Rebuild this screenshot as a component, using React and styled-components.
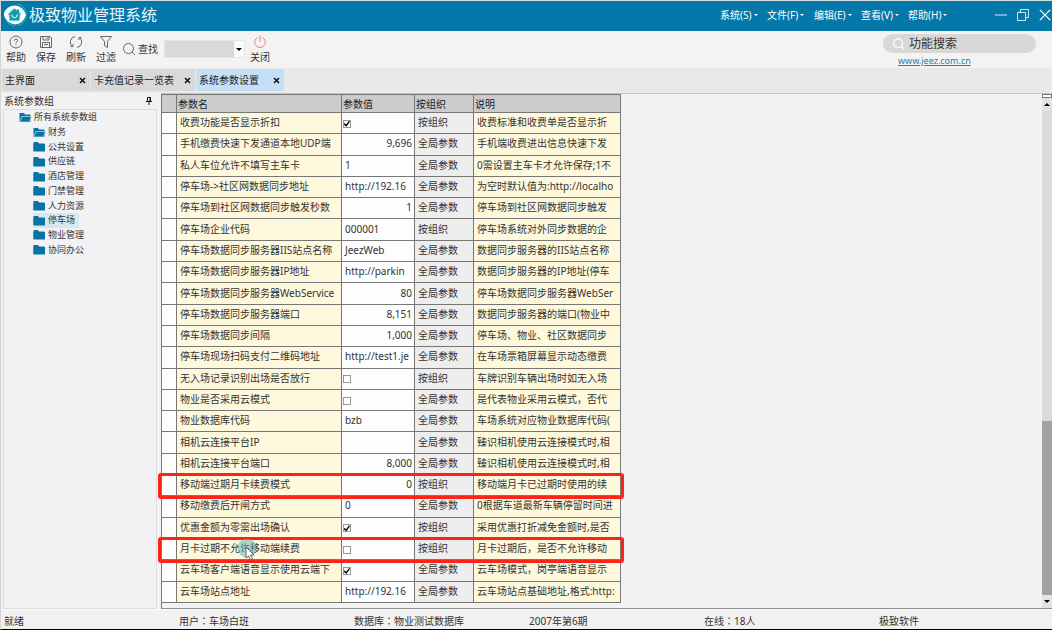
import React from "react";
import styled, { createGlobalStyle, css } from "styled-components";

const GlobalStyle = createGlobalStyle`
  *, *::before, *::after { box-sizing: border-box; }
  body {
    margin: 0;
    background: #f2f2f2;
    color: #333;
    font: 10px/14px "Noto Sans", "Noto Sans CJK SC", sans-serif;
  }
  button, input, select { font: inherit; color: inherit; }
`;

const plainButton = css`
  border: 0;
  padding: 0;
  background: none;
  cursor: pointer;
`;

const Window = styled.div`
  display: flex;
  flex-direction: column;
  min-height: 100vh;
  border-left: 1px solid #d4d4d4;
  border-bottom: 1px solid #000;
`;

const TitleBar = styled.header`
  display: flex;
  align-items: center;
  height: 31px;
  padding: 0 1px 2px 2px;
  border-top: 1px solid #d5dcdf;
  background: #0478a8;
  color: #fff;
`;

const Title = styled.h1`
  flex: 1;
  margin: 0 0 0 2px;
  font-size: 16px;
  line-height: 24px;
  font-weight: 400;
  color: #e6f6ff;
`;

const MenuBar = styled.nav`
  display: flex;
  margin-right: 40px;
`;

const MenuButton = styled.button`
  ${plainButton}
  display: flex;
  align-items: center;
  gap: 2px;
  width: 47px;
  white-space: nowrap;

  &::after {
    content: "";
    border: 2px solid transparent;
    border-top-color: #fff;
    border-bottom: 0;
  }
`;

const WindowControls = styled.div`
  display: flex;
  gap: 10px;
`;

const WindowButton = styled.button`
  ${plainButton}
  display: flex;
  width: 12px;
  height: 12px;
`;

const Toolbar = styled.div`
  display: flex;
  height: 37px;
  background: #f3f3f3;
`;

const ToolButton = styled.button`
  ${plainButton}
  display: flex;
  flex-direction: column;
  align-items: center;
  gap: 1px;
  width: 30px;
  padding-top: 4px;
`;

const FindField = styled.label`
  display: flex;
  align-items: center;
  gap: 2px;
  margin-left: 1px;
  padding-bottom: 2px;
`;

const Combo = styled.span`
  position: relative;
  display: flex;
  margin-left: 4px;

  &::after {
    content: "";
    position: absolute;
    right: 3px;
    top: 8px;
    border: 3px solid transparent;
    border-top-color: #000;
    border-bottom: 0;
    pointer-events: none;
  }
`;

const ComboSelect = styled.select`
  appearance: none;
  width: 81px;
  height: 18px;
  border: 1px solid #e6e6e6;
  border-radius: 0;
  background: linear-gradient(to left, #fafafa 10px, #d9d9d9 10px);
`;

const SearchArea = styled.div`
  display: flex;
  flex-direction: column;
  align-items: flex-start;
  width: 153px;
  margin: 3px 16px 0 auto;
`;

const SearchBox = styled.label`
  display: flex;
  align-items: center;
  gap: 4px;
  width: 100%;
  height: 19px;
  padding: 0 10px;
  border-radius: 10px;
  background: #d8d8d8;
`;

const SearchInput = styled.input`
  flex: 1;
  min-width: 0;
  padding: 0;
  border: 0;
  outline: 0;
  background: none;
  font-size: 12px;
  line-height: 18px;

  &::placeholder { color: #333; opacity: 1; }
`;

const SiteLink = styled.a`
  margin: 1px 0 0 15px;
  font-size: 9px;
  line-height: 14px;
  color: #257fa8;
`;

const TabStrip = styled.div`
  display: flex;
  gap: 1px;
  height: 25px;
  padding: 1px 0 2px 1px;
  background: #e9e9e9;
`;

const Tab = styled.div`
  display: flex;
  align-items: center;
  justify-content: space-between;
  width: ${(p) => p.$width}px;
  padding: 0 4px 0 3px;
  background: ${(p) => (p.$active ? "#c5e0f6" : "#d9d9d9")};
`;

const TabName = styled.button`
  ${plainButton}
  color: #222;
  white-space: nowrap;
`;

const TabClose = styled.button`
  ${plainButton}
  display: flex;
`;

const Main = styled.main`
  display: flex;
  flex: 1;
`;

const Sidebar = styled.aside`
  display: flex;
  flex-direction: column;
  width: 156px;
  margin-right: 4px;
  padding-left: 2px;
`;

const SidebarHead = styled.div`
  display: flex;
  align-items: center;
  justify-content: space-between;
  height: 16px;
  padding: 0 5px 0 1px;
`;

const SidebarTitle = styled.h2`
  margin: 0;
  font-size: 10px;
  font-weight: 400;
`;

const TreePane = styled.div`
  flex: 1;
  border: 1px solid #dcdcdc;
  background: #f2f2f4;
`;

const Tree = styled.ul`
  display: grid;
  grid-auto-rows: 1fr;
  height: 147px;
  margin: 0;
  padding: 0;
  list-style: none;
  font-size: 9px;
`;

const TreeItem = styled.li`
  display: flex;
  padding-left: ${(p) => (p.$root ? 15 : 29)}px;
`;

const TreeButton = styled.button`
  ${plainButton}
  display: flex;
  align-items: center;
  gap: 2px;
  padding-right: 4px;
  background: ${(p) => (p.$selected ? "#d5e9ef" : "none")};
`;

const GridPanel = styled.section`
  display: flex;
  flex: 1;
  border-top: 1px solid #c4c4c4;
  border-bottom: 1px solid #8f8f8f;
`;

const GridArea = styled.div`
  display: flex;
  flex: 1;
  padding-bottom: 5px;
  border-left: 1px solid #777;
`;

const Table = styled.table`
  table-layout: fixed;
  width: 459px;
  border-spacing: 0;
  border-top: 1px solid #777;
`;

const HeadRow = styled.tr`
  height: 18px;
`;

const HeadCell = styled.th`
  padding: 0 1px;
  border-right: 1px solid #777;
  border-bottom: 1px solid #777;
  background: #cccccc;
  color: #222;
  font-weight: 400;
  text-align: left;
`;

const Row = styled.tr`
  position: relative;
`;

const Cell = styled.td`
  position: relative;
  padding: 0 2px 2px 3px;
  border-right: 1px solid #777;
  border-bottom: 1px solid #777;
  background: ${(p) => ({ note: "#fef8dd", scope: "#ededed" })[p.$kind] || "#fdfdfd"};
  text-align: ${(p) => (p.$numeric ? "right" : "left")};
  white-space: nowrap;
`;

const SelectorCell = styled.td`
  padding: 0;
  border-right: 1px solid #777;
  border-bottom: 1px solid #777;
  background: #fdfdfd;
`;

const Outline = styled.span`
  position: absolute;
  z-index: 1;
  inset: -2px -3px -3px -4px;
  border: 3px solid #fb2418;
  border-radius: 3px;
  pointer-events: none;
`;

const CheckBox = styled.input`
  appearance: none;
  display: block;
  width: 8px;
  height: 8px;
  margin: 3px 0 0 -2px;
  border: 1px solid #999;
  background: #fff;

  &:checked::after {
    content: "";
    display: block;
    width: 6px;
    height: 6px;
    background: #000;
    clip-path: polygon(0 40%, 35% 65%, 85% 0, 100% 15%, 40% 100%, 0 70%);
  }
`;

const Pointer = styled.svg`
  position: absolute;
  z-index: 2;
  left: 58px;
  top: 0;
  pointer-events: none;
`;

const ScrollBar = styled.div`
  display: flex;
  flex-direction: column;
  width: 10px;
  background: #d9dad9;
`;

const ScrollSplit = styled.div`
  height: 4px;
  border: 1px solid #777;
  background: #fff;
`;

const ScrollArrow = styled.button`
  ${plainButton}
  display: flex;
  align-items: center;
  justify-content: center;
  height: 13px;
  background: #e3e3e3;

  &::after {
    content: "";
    border: 3px solid transparent;
    ${(p) =>
      p.$up
        ? "border-bottom-color: #000; border-top: 0;"
        : "border-top-color: #000; border-bottom: 0;"}
  }
`;

const ScrollTrack = styled.div`
  flex: 311;
`;

const ScrollThumb = styled.div`
  flex: 174;
  background: #a1a2a1;
`;

const StatusBar = styled.footer`
  display: grid;
  grid-template-columns: repeat(6, 1fr);
  align-items: center;
  height: 20px;
  padding: 2px 0 0 1px;
  border-top: 1px solid #fbfbfb;
  background: #f1f1f1;
`;

const StatusItem = styled.span`
  padding-left: 2px;
  font-family: "Noto Sans", "Noto Sans CJK TC", sans-serif;
`;

const Icon = ({ size = 14, color = "#666", width = 1, children }) => (
  <svg width={size} height={size} viewBox="0 0 14 14" fill="none" stroke={color} strokeWidth={width} aria-hidden="true">
    {children}
  </svg>
);

const Logo = () => (
  <svg width="24" height="24" viewBox="0 0 24 24" aria-hidden="true">
    <path d="M14 1A11 11 0 0 1 15 22.500" fill="none" stroke="#1fa3b5" strokeWidth="1.600" />
    <path d="M3 17A11 11 0 0 0 12 23" fill="none" stroke="#1fa3b5" strokeWidth="1.400" />
    <path d="M1 10Q4 2.500 12 2.500Q20 3 23 12Q20 21 12 21.500Q4 20.500 1 13Z" fill="#f4ffff" />
    <circle cx="11.500" cy="12" r="6.500" fill="#c3eef0" />
    <path d="M5 11.500L11.500 5.500L14 7.700V6.500H16V9.500L18 11.500H16.500V17.500H6.500V11.500Z" fill="#1599a8" />
    <path d="M9 11.500V13Q11.500 16.500 14 13V11.500" fill="none" stroke="#d3ffff" strokeWidth="1.200" />
  </svg>
);

const Folder = ({ open }) => (
  <svg width="13" height="11" viewBox="0 0 13 11" aria-hidden="true">
    <path d="M0.500 1H5L6 2.500H11.500V10H0.500Z" fill="#0874a5" />
    {open ? (
      <path d="M1 9.500L3 4.500H12.500L10.500 10H1Z" fill="#0874a5" stroke="#c8e2ee" strokeWidth="0.700" />
    ) : (
      <path d="M0.500 3H12V10.500H0.500Z" fill="#0874a5" />
    )}
  </svg>
);

const CloseMark = () => (
  <svg width="7" height="7" viewBox="0 0 7 7" stroke="#111" strokeWidth="1.500" aria-hidden="true">
    <path d="M1 1L6 6M6 1L1 6" />
  </svg>
);

const tools = [
  ["帮助", <><circle cx="7" cy="7" r="6" /><path d="M5.300 5.700Q5.300 4 7 4Q8.700 4 8.700 5.500Q8.700 6.500 7 7.300V8.300M7 9.300V10.300" /></>],
  ["保存", <><path d="M1.500 1.500H11L12.500 3V12.500H1.500ZM4 1.500V5H10V1.500M8 2.500V4M3.500 12.500V7.500H10.500V12.500M5 9.500H9" /></>],
  ["刷新", <><path d="M6 1.500A5.600 5.600 0 0 0 3.500 11.500M1.500 11.500H4V9M8 12.500A5.600 5.600 0 0 0 10.500 2.500M12.500 2.500H10V5" /></>],
  ["过滤", <><path d="M1.500 1.500H12.500L8.500 6.500V12.500L5.500 10.500V6.500Z" /></>],
];

const menus = ["系统(S)", "文件(F)", "编辑(E)", "查看(V)", "帮助(H)"];

const tabs = [
  { name: "主界面", width: 88 },
  { name: "卡充值记录一览表", width: 104 },
  { name: "系统参数设置", width: 88, active: true },
];

const groups = ["财务", "公共设置", "供应链", "酒店管理", "门禁管理", "人力资源", "停车场", "物业管理", "协同办公"];

const ORG = "按组织";
const ALL = "全局参数";

const rows = [
  { name: "收费功能是否显示折扣", value: true, scope: ORG, note: "收费标准和收费单是否显示折" },
  { name: "手机缴费快速下发通道本地UDP端", value: "9,696", numeric: true, scope: ALL, note: "手机端收费进出信息快速下发" },
  { name: "私人车位允许不填写主车卡", value: "1", scope: ALL, note: "0需设置主车卡才允许保存;1不" },
  { name: "停车场->社区网数据同步地址", value: "http://192.16", scope: ALL, note: "为空时默认值为:http://localho" },
  { name: "停车场到社区网数据同步触发秒数", value: "1", numeric: true, scope: ALL, note: "停车场到社区网数据同步触发" },
  { name: "停车场企业代码", value: "000001", scope: ORG, note: "停车场系统对外同步数据的企" },
  { name: "停车场数据同步服务器IIS站点名称", value: "JeezWeb", scope: ALL, note: "数据同步服务器的IIS站点名称" },
  { name: "停车场数据同步服务器IP地址", value: "http://parkin", scope: ALL, note: "数据同步服务器的IP地址(停车" },
  { name: "停车场数据同步服务器WebService", value: "80", numeric: true, scope: ALL, note: "停车场数据同步服务器WebSer" },
  { name: "停车场数据同步服务器端口", value: "8,151", numeric: true, scope: ALL, note: "数据同步服务器的端口(物业中" },
  { name: "停车场数据同步间隔", value: "1,000", numeric: true, scope: ALL, note: "停车场、物业、社区数据同步" },
  { name: "停车场现场扫码支付二维码地址", value: "http://test1.je", scope: ALL, note: "在车场票箱屏幕显示动态缴费" },
  { name: "无入场记录识别出场是否放行", value: false, scope: ORG, note: "车牌识别车辆出场时如无入场" },
  { name: "物业是否采用云模式", value: false, scope: ALL, note: "是代表物业采用云模式，否代" },
  { name: "物业数据库代码", value: "bzb", scope: ALL, note: "车场系统对应物业数据库代码(" },
  { name: "相机云连接平台IP", value: "", scope: ALL, note: "臻识相机使用云连接模式时,相" },
  { name: "相机云连接平台端口", value: "8,000", numeric: true, scope: ALL, note: "臻识相机使用云连接模式时,相" },
  { name: "移动端过期月卡续费模式", value: "0", numeric: true, scope: ORG, note: "移动端月卡已过期时使用的续", outlined: true },
  { name: "移动缴费后开闸方式", value: "0", scope: ALL, note: "0根据车道最新车辆停留时间进" },
  { name: "优惠金额为零需出场确认", value: true, scope: ORG, note: "采用优惠打折减免金额时,是否" },
  { name: "月卡过期不允许移动端续费", value: false, scope: ORG, note: "月卡过期后，是否不允许移动", outlined: true, pointer: true },
  { name: "云车场客户端语音显示使用云端下", value: true, scope: ALL, note: "云车场模式，岗亭端语音显示" },
  { name: "云车场站点地址", value: "http://192.16", scope: ALL, note: "云车场站点基础地址,格式:http:" },
];

const statuses = ["就绪", "用户：车场白班", "数据库：物业测试数据库", "2007年第6期", "在线：18人", "极致软件"];

const ParamRow = ({ row }) => (
  <Row>
    <SelectorCell>{row.outlined && <Outline />}</SelectorCell>
    <Cell $kind="note">
      {row.name}
      {row.pointer && (
        <Pointer width="24" height="24" viewBox="0 0 24 24" aria-hidden="true">
          <circle cx="12" cy="9" r="9.500" fill="#5bb3b5" fillOpacity="0.500" />
          <path d="M11 8V19L13.500 17L15.500 21L17.500 20L15.500 16H19Z" fill="#fff" stroke="#444" strokeWidth="0.800" />
        </Pointer>
      )}
    </Cell>
    <Cell $numeric={row.numeric}>
      {typeof row.value === "boolean" ? (
        <CheckBox type="checkbox" defaultChecked={row.value} aria-label={row.name} />
      ) : (
        row.value
      )}
    </Cell>
    <Cell $kind="scope">{row.scope}</Cell>
    <Cell $kind="note">{row.note}</Cell>
  </Row>
);

export default function App() {
  return (
    <Window>
      <GlobalStyle />
      <TitleBar>
        <Logo />
        <Title>极致物业管理系统</Title>
        <MenuBar>
          {menus.map((m) => <MenuButton key={m}>{m}</MenuButton>)}
        </MenuBar>
        <WindowControls>
          <WindowButton aria-label="最小化">
            <Icon size={12} color="#fff"><path d="M0 7H14" /></Icon>
          </WindowButton>
          <WindowButton aria-label="还原">
            <Icon size={12} color="#fff"><path d="M0.500 4H10V13.500H0.500ZM4 4V0.500H13.500V10H10" /></Icon>
          </WindowButton>
          <WindowButton aria-label="关闭窗口">
            <Icon size={12} color="#fff" width={1.5}><path d="M1 1L13 13M13 1L1 13" /></Icon>
          </WindowButton>
        </WindowControls>
      </TitleBar>

      <Toolbar>
        {tools.map(([name, shape]) => (
          <ToolButton key={name}><Icon>{shape}</Icon>{name}</ToolButton>
        ))}
        <FindField>
          <Icon><circle cx="6.500" cy="6.500" r="5" /><path d="M10 10L13 13" /></Icon>
          查找
          <Combo><ComboSelect><option value="" /></ComboSelect></Combo>
        </FindField>
        <ToolButton>
          <Icon color="#ee7f7f"><path d="M4.500 2.500A5.300 5.300 0 1 0 9.500 2.500M7 0.500V6.500" /></Icon>
          关闭
        </ToolButton>
        <SearchArea>
          <SearchBox>
            <Icon size={12} color="#fff" width={1.5}><circle cx="6" cy="6" r="5" /><path d="M10 10L13 13" /></Icon>
            <SearchInput type="text" placeholder="功能搜索" aria-label="功能搜索" />
          </SearchBox>
          <SiteLink href="http://www.jeez.com.cn">www.jeez.com.cn</SiteLink>
        </SearchArea>
      </Toolbar>

      <TabStrip>
        {tabs.map((t) => (
          <Tab key={t.name} $width={t.width} $active={t.active}>
            <TabName>{t.name}</TabName>
            <TabClose aria-label={`关闭${t.name}`}><CloseMark /></TabClose>
          </Tab>
        ))}
      </TabStrip>

      <Main>
        <Sidebar>
          <SidebarHead>
            <SidebarTitle>系统参数组</SidebarTitle>
            <svg width="6" height="8" viewBox="0 0 6 8" fill="none" stroke="#111" aria-hidden="true">
              <path d="M1.500 4V0.500H4.500V4M4 0.500V4M0 4.500H6M3 5V8" />
            </svg>
          </SidebarHead>
          <TreePane>
            <Tree>
              <TreeItem $root><TreeButton><Folder open />所有系统参数组</TreeButton></TreeItem>
              {groups.map((g, i) => (
                <TreeItem key={g}>
                  <TreeButton $selected={g === "停车场"}><Folder open={i === 0} />{g}</TreeButton>
                </TreeItem>
              ))}
            </Tree>
          </TreePane>
        </Sidebar>

        <GridPanel>
          <GridArea>
            <Table>
              <colgroup>
                <col width="15" />
                <col width="165" />
                <col width="73" />
                <col width="59" />
                <col width="147" />
              </colgroup>
              <thead>
                <HeadRow>
                  <HeadCell />
                  <HeadCell>参数名</HeadCell>
                  <HeadCell>参数值</HeadCell>
                  <HeadCell>按组织</HeadCell>
                  <HeadCell>说明</HeadCell>
                </HeadRow>
              </thead>
              <tbody>
                {rows.map((row) => <ParamRow key={row.name} row={row} />)}
              </tbody>
            </Table>
          </GridArea>
          <ScrollBar>
            <ScrollSplit />
            <ScrollArrow $up aria-label="向上滚动" />
            <ScrollTrack />
            <ScrollThumb />
            <ScrollArrow aria-label="向下滚动" />
          </ScrollBar>
        </GridPanel>
      </Main>

      <StatusBar>
        {statuses.map((s) => <StatusItem key={s}>{s}</StatusItem>)}
      </StatusBar>
    </Window>
  );
}
